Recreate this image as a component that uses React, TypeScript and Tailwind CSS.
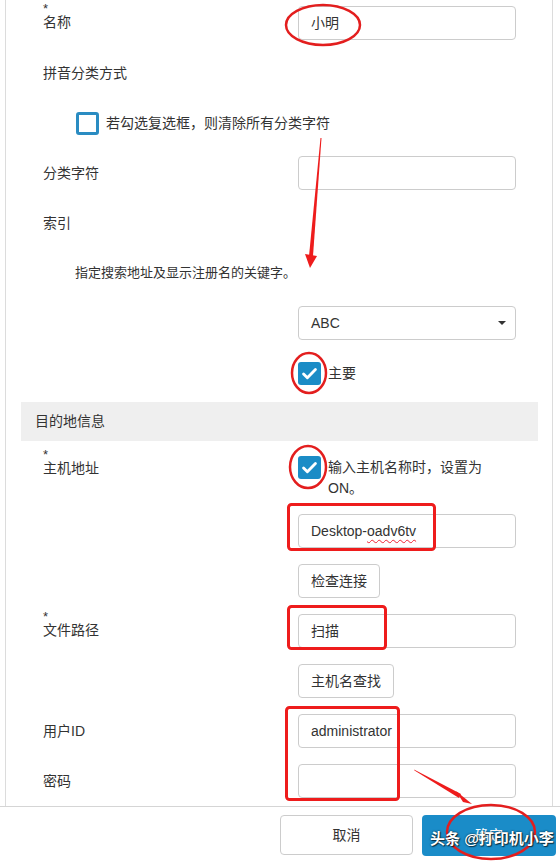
import type { ReactNode } from 'react'

const FONT = { fontFamily: '"Liberation Sans", "Noto Sans CJK SC", sans-serif' }

function Label({ text, star }: { text: string; star?: boolean }) {
  if (star) {
    return (
      <div className="w-[255px] shrink-0 flex flex-col">
        <span className="text-[13px] leading-[8px] h-[8px] -mt-[1px] text-[#333]">*</span>
        <span className="text-[14px] leading-[16px] mt-[1px] text-[#333]">{text}</span>
      </div>
    )
  }
  return (
    <div className="w-[255px] shrink-0 flex items-center text-[14px] text-[#333]">{text}</div>
  )
}

function Field({ children }: { children?: ReactNode }) {
  return (
    <div className="w-[218px] h-[34px] border border-[#ccc] rounded-[4px] bg-white px-3 flex items-center text-[14px] text-[#333]">
      {children}
    </div>
  )
}

function Btn({ children }: { children: ReactNode }) {
  return (
    <div className="h-[34px] px-3 border border-[#ccc] rounded-[4px] bg-white flex items-center text-[14px] text-[#333]">
      {children}
    </div>
  )
}

function Check({ on }: { on?: boolean }) {
  return on ? (
    <div className="w-[23px] h-[23px] rounded-[3px] bg-[#1b8cc6] flex items-center justify-center shrink-0">
      <svg viewBox="0 0 24 24" className="w-[19px] h-[19px]" fill="none" stroke="white" strokeWidth="3.6" strokeLinecap="round" strokeLinejoin="round">
        <path d="M4.5 12.5l4.8 4.8L19.5 7" />
      </svg>
    </div>
  ) : (
    <div className="w-[23px] h-[23px] rounded-[3px] border-[3px] border-[#2a8cc2] bg-white shrink-0" />
  )
}

export default function App() {
  return (
    <div className="relative w-[560px] h-[864px] overflow-hidden bg-white" style={FONT}>
      {/* main form panel */}
      <div className="ml-[5px] w-[548px] h-[806px] border-l border-r border-[#dcdcdc] overflow-hidden">
        <div className="pt-[6px]">
          <div className="pl-[37px]">
            <div className="flex h-[34px] mb-4">
              <Label text="名称" star />
              <Field>小明</Field>
            </div>
            <div className="flex h-[34px] mb-4">
              <Label text="拼音分类方式" />
            </div>
            <div className="flex h-[34px] mb-4 items-center pl-[33px] gap-[7px]">
              <Check />
              <span className="text-[14px] text-[#333]">若勾选复选框，则清除所有分类字符</span>
            </div>
            <div className="flex h-[34px] mb-4">
              <Label text="分类字符" />
              <Field />
            </div>
            <div className="flex h-[34px] mb-4">
              <Label text="索引" />
            </div>
            <div className="flex h-[34px] mb-4 items-center pl-[32px]">
              <span className="text-[13px] text-[#333]">指定搜索地址及显示注册名的关键字。</span>
            </div>
            <div className="flex h-[34px] mb-4">
              <div className="w-[255px] shrink-0" />
              <div className="w-[218px] h-[34px] border border-[#ccc] rounded-[4px] bg-white pl-3 pr-[9px] flex items-center justify-between text-[14px] text-[#333]">
                <span>ABC</span>
                <span className="w-0 h-0 border-l-[4px] border-r-[4px] border-t-[4px] border-l-transparent border-r-transparent border-t-[#333]" />
              </div>
            </div>
            <div className="flex h-[34px] items-center">
              <div className="w-[255px] shrink-0" />
              <Check on />
              <span className="ml-[7px] text-[14px] text-[#333]">主要</span>
            </div>
          </div>

          <div className="mt-3 ml-[15px] w-[517px] h-[39px] bg-[#efefef] pl-[14px] flex items-center text-[14px] text-[#333]">
            目的地信息
          </div>

          <div className="pl-[37px] pt-[10px]">
            <div className="flex mb-[15px]">
              <div className="w-[255px] shrink-0 flex flex-col">
                <span className="text-[13px] leading-[8px] h-[8px] text-[#333]">*</span>
                <span className="text-[14px] leading-[16px] mt-[1px] text-[#333]">主机地址</span>
              </div>
              <div className="pt-[5px]">
                <Check on />
              </div>
              <div className="ml-[7px] pt-[6px] text-[14px] leading-[21px] text-[#333]">
                输入主机名称时，设置为
                <br />
                ON。
              </div>
            </div>
            <div className="flex h-[34px] mb-4">
              <div className="w-[255px] shrink-0" />
              <Field>
                <span>
                  Desktop-<span className="underline decoration-wavy decoration-[#e23] decoration-1 underline-offset-[3px]">oadv6tv</span>
                </span>
              </Field>
            </div>
            <div className="flex h-[34px] mb-4">
              <div className="w-[255px] shrink-0" />
              <Btn>检查连接</Btn>
            </div>
            <div className="flex h-[34px] mb-4">
              <Label text="文件路径" star />
              <Field>扫描</Field>
            </div>
            <div className="flex h-[34px] mb-4">
              <div className="w-[255px] shrink-0" />
              <Btn>主机名查找</Btn>
            </div>
            <div className="flex h-[34px] mb-4">
              <Label text="用户ID" />
              <Field>administrator</Field>
            </div>
            <div className="flex h-[34px] mb-4">
              <Label text="密码" />
              <Field />
            </div>
          </div>
        </div>
      </div>

      {/* footer */}
      <div className="border-t border-[#d5d5d5] h-[58px] flex justify-end items-start pt-[8px] pr-[4px] gap-[9px]">
        <div className="w-[133px] h-[40px] border border-[#ccc] rounded-[4px] bg-white flex items-center justify-center text-[14px] text-[#333]">
          取消
        </div>
        <div className="w-[134px] h-[41px] rounded-[4px] bg-[#1a8cc8] flex items-center justify-center text-[14px] text-white">
          确定
        </div>
      </div>

      {/* red annotations */}
      <svg className="absolute inset-0 pointer-events-none" width="560" height="864" viewBox="0 0 560 864" fill="none">
        <ellipse cx="323" cy="25" rx="37" ry="20" stroke="#e31e1e" strokeWidth="2.5" />
        <polygon points="320.5,138 321.5,138 313,256 309,256" fill="#ee1c1c" />
        <polygon points="305,254 317,256 310,268" fill="#ee1c1c" />
        <ellipse cx="309" cy="373" rx="17" ry="20" stroke="#e31e1e" strokeWidth="2.5" />
        <ellipse cx="308" cy="467" rx="18" ry="21" stroke="#e31e1e" strokeWidth="2.5" />
        <rect x="288.5" y="504.5" width="146" height="45" rx="3" stroke="#ee1c1c" strokeWidth="3" />
        <rect x="288.5" y="606.5" width="97" height="42" rx="3" stroke="#ee1c1c" strokeWidth="3" />
        <rect x="286.5" y="707.5" width="112" height="92" rx="3" stroke="#ee1c1c" strokeWidth="3" />
        <polygon points="414,769.5 414.5,770.5 459,798 461,794" fill="#ee1c1c" />
        <polygon points="456,791 463,802 472,804" fill="#ee1c1c" />
        <ellipse cx="491" cy="832" rx="44" ry="27" stroke="#e31e1e" strokeWidth="2.5" />
      </svg>

      {/* watermark */}
      <span
        className="absolute left-[430px] top-[829px] text-[15px] leading-[20px] font-semibold text-white whitespace-nowrap"
        style={{ textShadow: '0 0 2px rgba(0,0,0,0.8), 1px 1px 1px rgba(0,0,0,0.6)' }}
      >
        头条 @打印机小李
      </span>
    </div>
  )
}
